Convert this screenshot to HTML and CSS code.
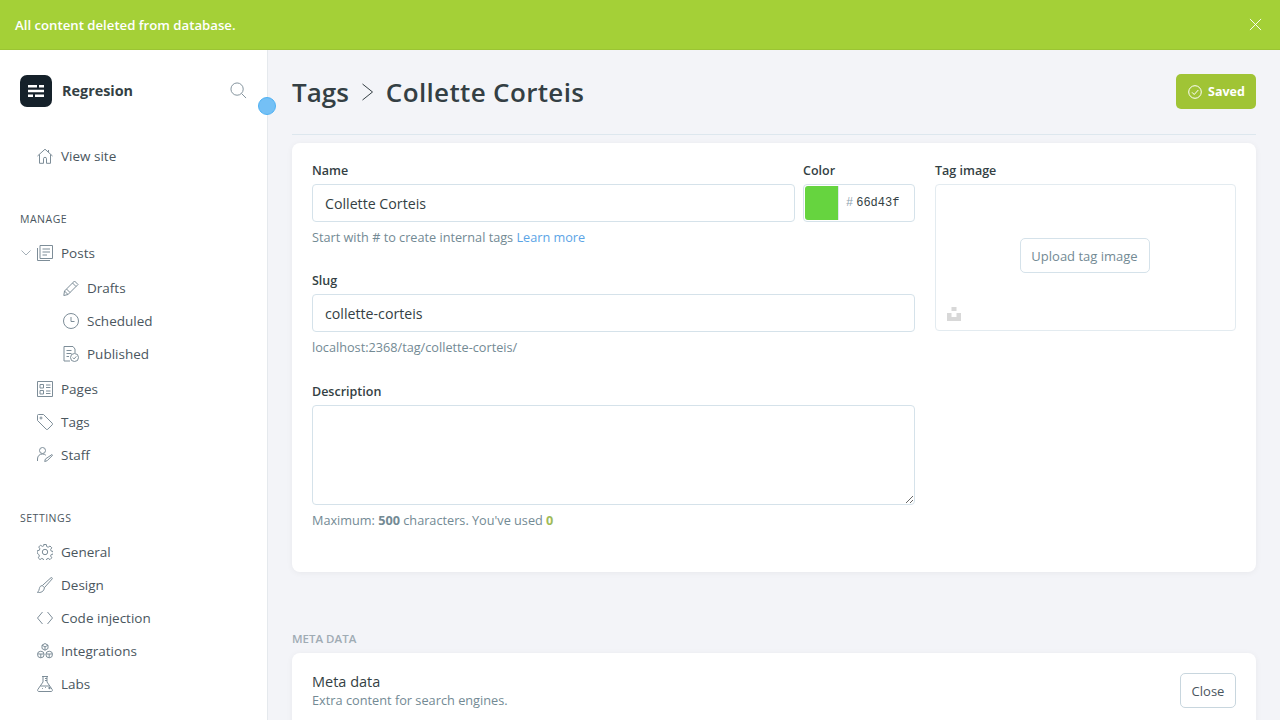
FILE: index.html
```html
<!DOCTYPE html>
<html lang="en">
<head>
    <meta charset="UTF-8">
    <meta name="viewport" content="width=device-width, initial-scale=1.0">
    <title>Tags - Regresion</title>
    <link rel="stylesheet" href="styles.css">
</head>
<body>
    <!-- Top notification -->
    <div class="alert">
        <span>All content deleted from database.</span>
        <svg class="alert-close" viewBox="0 0 14 14"><path d="M1 1l12 12M13 1L1 13"/></svg>
    </div>

    <div class="app">
        <aside class="sidebar">
            <div class="brand">
                <div class="logo">
                    <svg viewBox="0 0 16 14"><path d="M0 1h9v2.400H0zM11 1h5v2.400h-5zM0 5.800h16v2.400H0zM0 10.600h5V13H0zM7 10.600h9V13H7z"/></svg>
                </div>
                <span class="brand-name">Regresion</span>
                <svg class="icon search" viewBox="0 0 18 18"><circle cx="7.500" cy="7.500" r="6.500"/><path d="M12.300 12.300L17 17"/></svg>
            </div>
            <span class="hotspot"></span>

            <a class="nav-item view-site">
                <svg class="icon" viewBox="0 0 16 16"><path d="M.5 8L8 1.200 15.500 8M2.500 6.500v8.800h4v-4.500a1.500 1.500 0 013 0v4.500h4V6.500M11.500 2v2"/></svg>
                View site
            </a>

            <h4 class="nav-title nav-manage">MANAGE</h4>
            <a class="nav-item">
                <svg class="caret" viewBox="0 0 10 6"><path d="M.5.500L5 5 9.500.500"/></svg>
                <svg class="icon" viewBox="0 0 16 16"><path d="M3 .5h12.500v13H3zM.5 3v12.500h12.500M5.500 4h7.500M5.500 7h7.500M5.500 10h4.500"/></svg>
                Posts
            </a>
            <div class="subnav">
                <a class="nav-item sub">
                    <svg class="icon" viewBox="0 0 16 16"><path d="M11.500 1L15 4.500 5 14.500.8 15.500 1.500 11zM9.500 3L13 6.500M1.500 11L5 14.500M3.500 9L7 12.500"/></svg>
                    Drafts
                </a>
                <a class="nav-item sub">
                    <svg class="icon" viewBox="0 0 16 16"><circle cx="8" cy="8" r="7.500"/><path d="M8 4v4.500h3.500"/></svg>
                    Scheduled
                </a>
                <a class="nav-item sub">
                    <svg class="icon" viewBox="0 0 16 16"><path d="M7 15H1V.5h9L12 3v4M3.500 4.500h5M3.500 7.500h5M3.500 10.500h2.500"/><circle cx="11.500" cy="11.500" r="4"/><path d="M9.800 11.600l1.300 1.300 2.200-2.500"/></svg>
                    Published
                </a>
            </div>
            <a class="nav-item">
                <svg class="icon" viewBox="0 0 16 16"><path d="M.5.500h15v15H.5zM3 3.500h3.500V7H3zM3 9.500h3.500V13H3zM9 4h4.500M9 6.500h4.500M9 10h4.500M9 12.500h4.500"/></svg>
                Pages
            </a>
            <a class="nav-item">
                <svg class="icon" viewBox="0 0 16 16"><path d="M.5 1.500a1 1 0 011-1h5L15.300 9.300a1 1 0 010 1.400l-4.600 4.600a1 1 0 01-1.400 0L.5 6.500z"/><circle cx="4" cy="4" r="1"/></svg>
                Tags
            </a>
            <a class="nav-item">
                <svg class="icon" viewBox="0 0 16 16"><circle cx="5.500" cy="3.500" r="3"/><path d="M.5 12c0-3 2-5 5-5 1.500 0 2.500.500 3.300 1.200M15 7.500l.7.700-5.500 5.500-2.500.8.700-2.500zM.5 12v2"/></svg>
                Staff
            </a>

            <h4 class="nav-title nav-settings">SETTINGS</h4>
            <a class="nav-item">
                <svg class="icon" viewBox="0 0 16 16"><circle cx="8" cy="8" r="2.700"/><path d="M6.700.500h2.600l.4 2.100 1.500.6 1.800-1.200 1.800 1.800-1.200 1.800.6 1.500 2.100.4v2.600l-2.100.4-.6 1.500 1.200 1.800-1.800 1.800-1.800-1.200-1.500.6-.4 2.100H6.700l-.4-2.100-1.500-.6-1.800 1.200-1.800-1.800 1.200-1.800-.6-1.500L.2 9.300V6.700l2.100-.4.6-1.500-1.200-1.800 1.800-1.800 1.800 1.200 1.500-.6z"/></svg>
                General
            </a>
            <a class="nav-item">
                <svg class="icon" viewBox="0 0 16 16"><path d="M14 .7c.8-.5 1.700.4 1.200 1.200L7.400 10.700 5.300 8.600zM5.300 8.600C3.400 8.700 2.600 10 2.400 11.500 2.200 13 1.500 14.300.5 15.500c3 .4 6.600-.8 6.900-4.800"/></svg>
                Design
            </a>
            <a class="nav-item">
                <svg class="icon" viewBox="0 0 16 16"><path d="M5.500 2L.5 8l5 6M10.500 2l5 6-5 6"/></svg>
                Code injection
            </a>
            <a class="nav-item">
                <svg class="icon" viewBox="0 0 16 16"><path d="M8 .5l3 1.700v3.300L8 7.200 5 5.500V2.200zM5 2.200l3 1.700 3-1.700M8 3.900v3.300"/><circle cx="3.800" cy="11.500" r="3.300"/><circle cx="12.200" cy="11.500" r="3.300"/><path d="M.5 11h6.600M3.800 11v3.800M8.900 11h6.600M12.200 11v3.800"/></svg>
                Integrations
            </a>
            <a class="nav-item">
                <svg class="icon" viewBox="0 0 16 16"><path d="M5 .5h6M6 .5v5.500L.8 13.500c-.6 1 0 2 1 2h12.400c1 0 1.600-1 1-2L10 6V.5M8 2.500h2M8 4.500h2M3.500 10h9M11 12h3M12.500 10.800v2.400M5 12.500h.8M8 11.500h.8"/></svg>
                Labs
            </a>
        </aside>

        <main class="main">
            <header class="page-head">
                <h1 class="page-title">
                    <span>Tags</span>
                    <svg class="crumb" viewBox="0 0 12 18"><path d="M1.500 1l10 8-10 8"/></svg>
                    <span class="tag-name">Collette Corteis</span>
                </h1>
                <button class="btn-saved">
                    <svg viewBox="0 0 14 14"><circle cx="7" cy="7" r="6.300"/><path d="M4 7.300l2.200 2.200L10.300 5"/></svg>
                    Saved
                </button>
            </header>

            <section class="card tag-card">
                <div class="tag-left">
                    <div class="name-row">
                        <div class="field name-field">
                            <label>Name</label>
                            <input class="input" type="text" value="Collette Corteis">
                        </div>
                        <div class="field color-field">
                            <label>Color</label>
                            <div class="color-box">
                                <span class="swatch"></span>
                                <span class="hash">#</span>
                                <span class="hex">66d43f</span>
                            </div>
                        </div>
                    </div>
                    <p class="hint">Start with # to create internal tags <a class="link">Learn more</a></p>

                    <div class="field slug-field">
                        <label>Slug</label>
                        <input class="input" type="text" value="collette-corteis">
                    </div>
                    <p class="hint">localhost:2368/tag/collette-corteis/</p>

                    <div class="field desc-field">
                        <label>Description</label>
                        <textarea class="input textarea"></textarea>
                    </div>
                    <p class="hint">Maximum: <b>500</b> characters. You've used <b class="count">0</b></p>
                </div>

                <div class="tag-right">
                    <label>Tag image</label>
                    <div class="upload">
                        <button class="btn">Upload tag image</button>
                        <svg class="unsplash" viewBox="0 0 14 14"><path d="M4.500 0h5v4h-5zM0 6h4.500v4h5V6H14v8H0z"/></svg>
                    </div>
                </div>
            </section>

            <h4 class="section-title">META DATA</h4>
            <section class="card meta-card">
                <div>
                    <h3 class="meta-title">Meta data</h3>
                    <p class="meta-sub">Extra content for search engines.</p>
                </div>
                <button class="btn btn-close">Close</button>
            </section>
        </main>
    </div>
</body>
</html>
```

FILE: styles.css
```css
* {
    box-sizing: border-box;
}
html, body {
    height: 100%;
}
body {
    margin: 0;
    overflow: hidden;
    font-family: "Open Sans", "Noto Sans", sans-serif;
    font-size: 13px;
    color: #15212a;
    background: #f3f4f8;
}

/* Notification */
.alert {
    display: flex;
    align-items: center;
    justify-content: space-between;
    height: 50px;
    padding: 0 18px 0 15px;
    background: #a4d037;
    border-bottom: 1px solid #9bc433;
    color: #fff;
    font-size: 13.200px;
    font-weight: 600;
}
.alert-close {
    width: 13px;
    height: 13px;
    fill: none;
    stroke: #fff;
    stroke-width: 1;
}

.app {
    display: flex;
    height: 670px;
    overflow: hidden;
}

/* Sidebar */
.sidebar {
    position: relative;
    flex: 0 0 268px;
    padding: 25px 0 0 20px;
    background: #fff;
    border-right: 1px solid #e5e9ed;
}
.brand {
    display: flex;
    align-items: center;
    height: 32px;
    padding-right: 20px;
}
.logo {
    display: flex;
    align-items: center;
    justify-content: center;
    width: 32px;
    height: 32px;
    margin-right: 10px;
    border-radius: 7px;
    background: #15212a;
}
.logo svg {
    width: 16px;
    height: 14px;
    fill: #fff;
}
.brand-name {
    flex: 1;
    margin-bottom: 2px;
    font-size: 14.400px;
    font-weight: 700;
    color: #343f44;
}
.icon {
    flex: none;
    width: 16px;
    height: 16px;
    fill: none;
    stroke: #7d8d98;
    stroke-width: 1;
}
.search {
    width: 17px;
    height: 17px;
    margin-bottom: 2px;
}
.hotspot {
    position: absolute;
    top: 47px;
    left: 258px;
    width: 18px;
    height: 18px;
    border-radius: 50%;
    background: #74c0f5;
    border: 1px solid #4fb1f3;
}
.nav-item {
    position: relative;
    display: flex;
    align-items: center;
    gap: 8px;
    height: 33px;
    padding-left: 17px;
    color: #4a565e;
    font-size: 13.500px;
}
.nav-item.sub {
    padding-left: 43px;
}
.subnav {
    margin: 2px 0;
}
.view-site {
    margin-top: 32px;
}
.caret {
    position: absolute;
    left: 1px;
    top: 14px;
    width: 10px;
    height: 6px;
    fill: none;
    stroke: #a5b0b8;
    stroke-width: 1;
}
.nav-title {
    margin: 0;
    height: 14px;
    line-height: 14px;
    font-size: 10.500px;
    font-weight: 500;
    letter-spacing: .5px;
    color: #4a565e;
}
.nav-manage {
    margin: 40px 0 10px;
}
.nav-settings {
    margin: 40px 0 10px;
}

/* Main column */
.main {
    flex: 1;
    padding: 0 24px;
    min-width: 0;
}
.page-head {
    display: flex;
    align-items: center;
    justify-content: space-between;
    height: 85px;
    padding-bottom: 1px;
    border-bottom: 1px solid #dde7ee;
}
.page-title {
    display: flex;
    align-items: center;
    gap: 12px;
    margin: 0;
    font-size: 26px;
    font-weight: 600;
    color: #343f44;
}
.tag-name {
    margin-left: 1px;
    letter-spacing: .35px;
}
.crumb {
    width: 12px;
    height: 18px;
    fill: none;
    stroke: #343f44;
    stroke-width: 1;
}
.btn-saved {
    display: flex;
    align-items: center;
    gap: 6px;
    width: 80px;
    height: 35px;
    padding: 0 0 0 12px;
    border: 0;
    border-radius: 5px;
    background: #a0c435;
    color: #fff;
    font-family: inherit;
    font-size: 12.500px;
    font-weight: 700;
}
.btn-saved svg {
    width: 14px;
    height: 14px;
    fill: none;
    stroke: #fff;
    stroke-width: 1;
}

/* Cards */
.card {
    background: #fff;
    border-radius: 8px;
    box-shadow: 0 1px 6px rgba(0, 0, 0, .05);
}
.tag-card {
    display: flex;
    gap: 20px;
    height: 429px;
    margin-top: 8px;
    padding: 20px;
}
.tag-left {
    flex: 0 0 603px;
}
.tag-right {
    flex: 1;
}
label {
    display: block;
    height: 14px;
    line-height: 16px;
    margin-bottom: 7px;
    font-size: 12.500px;
    font-weight: 600;
    color: #343f44;
}
.name-row {
    display: flex;
    gap: 8px;
}
.name-field {
    flex: 0 0 483px;
}
.color-field {
    flex: 1;
}
.input {
    display: block;
    width: 100%;
    height: 38px;
    padding: 0 12px;
    border: 1px solid #d5e2ea;
    border-radius: 4px;
    background: #fff;
    color: #343f44;
    font-family: inherit;
    font-size: 14.200px;
    outline: 0;
}
.textarea {
    height: 100px;
    resize: vertical;
}
.color-box {
    display: flex;
    align-items: center;
    height: 38px;
    padding: 1px;
    border: 1px solid #d5e2ea;
    border-radius: 4px;
}
.swatch {
    width: 33px;
    height: 34px;
    margin-right: 8px;
    border-radius: 3px 0 0 3px;
    background: #66d43f;
    box-shadow: 1px 0 0 #dde7ee;
}
.hash {
    margin-right: 3px;
    color: #8fa3b0;
    font-family: "Liberation Mono", monospace;
    font-size: 12px;
}
.hex {
    color: #343f44;
    font-family: "Liberation Mono", monospace;
    font-size: 12px;
}
.hint {
    margin: 0;
    height: 16px;
    line-height: 16px;
    margin-top: 7px;
    font-size: 12.700px;
    color: #738a94;
}
.hint b {
    font-weight: 700;
}
.count {
    color: #9fbb58;
}
.link {
    color: #5ba4e6;
}
.slug-field {
    margin-top: 28px;
}
.desc-field {
    margin-top: 29px;
}
.upload {
    position: relative;
    display: flex;
    align-items: center;
    justify-content: center;
    height: 147px;
    border: 1px solid #e3ebf0;
    border-radius: 4px;
}
.btn {
    height: 35px;
    padding: 0 11px;
    border: 1px solid #d5e2ea;
    border-radius: 5px;
    background: #fff;
    color: #738a94;
    font-family: inherit;
    font-size: 13px;
}
.upload .btn {
    width: 130px;
    padding: 0;
    margin: 0 2px 4px 0;
}
.unsplash {
    position: absolute;
    left: 11px;
    bottom: 9px;
    width: 14px;
    height: 14px;
    fill: #d8d8d8;
}
.section-title {
    margin: 60px 0 7px;
    height: 14px;
    line-height: 14px;
    font-size: 11.500px;
    font-weight: 600;
    color: #9fabb4;
}
.meta-card {
    display: flex;
    align-items: flex-start;
    justify-content: space-between;
    height: 120px;
    padding: 20px;
}
.meta-title {
    margin: 0;
    height: 18px;
    line-height: 18px;
    font-size: 14.500px;
    font-weight: 500;
    color: #343f44;
}
.meta-sub {
    margin: 1px 0 0;
    font-size: 12.750px;
    line-height: 16px;
    color: #738a94;
}
.btn-close {
    width: 56px;
    padding: 0;
    color: #4a565e;
    border-color: #c8d6de;
}
```
